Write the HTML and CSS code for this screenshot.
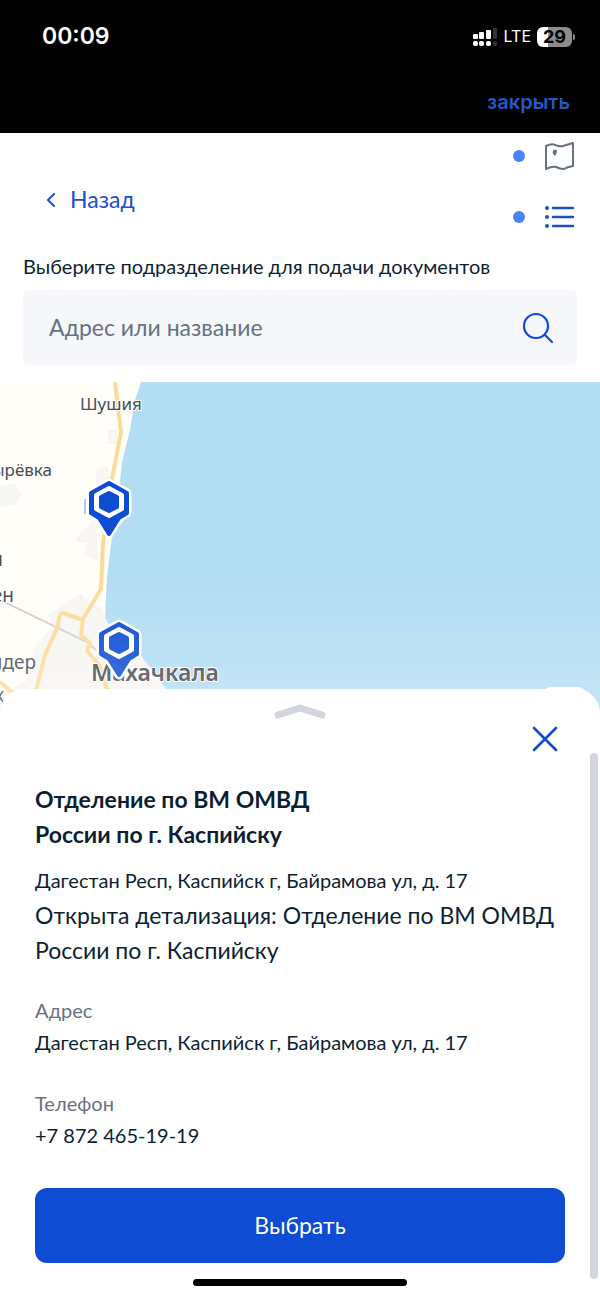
FILE: index.html
```html
<!DOCTYPE html>
<html lang="ru">
<head>
    <meta charset="UTF-8">
    <meta name="viewport" content="width=device-width, initial-scale=1.0">
    <title>Выбор подразделения</title>
    <link rel="stylesheet" href="styles.css">
</head>
<body>
    <header class="top">
        <div class="status">
            <span class="time">00:09</span>
            <div class="status-right">
                <svg class="signal" width="25" height="20" viewBox="0 0 25 20" fill="#fff">
                    <rect x="0" y="7" width="5" height="5" rx="1"/>
                    <rect x="6" y="5" width="5" height="7" rx="1"/>
                    <rect x="13" y="3" width="5" height="9" rx="1"/>
                    <rect x="20" y="1" width="4" height="11" rx="1" fill="#333"/>
                    <rect x="0" y="14" width="5" height="5" rx="2"/>
                    <rect x="6" y="14" width="5" height="5" rx="2"/>
                    <rect x="13" y="14" width="5" height="5" rx="2"/>
                    <rect x="20" y="14" width="4" height="5" rx="2" fill="#333"/>
                </svg>
                <span class="network">LTE</span>
                <span class="battery">29</span>
            </div>
        </div>
        <button class="dismiss" type="button">закрыть</button>
    </header>

    <main>
        <div class="toolbar">
            <a class="back" href="#">
                <svg width="8" height="14" viewBox="0 0 8 14" fill="none" stroke="#1b50c8" stroke-width="2" stroke-linecap="round" stroke-linejoin="round"><path d="M7 1 1 7l6 6"/></svg>
                Назад
            </a>
            <ul class="views">
                <li>
                    <button type="button" aria-label="Карта">
                        <svg width="32" height="30" viewBox="0 0 32 30" fill="none" stroke="#66727f" stroke-width="2" stroke-linejoin="round">
                            <path d="M3 5q6-3 9-1 5 2 8 1l10-3v23q-6 1-9 3-4 0-8-2-4-1-10 2z"/>
                            <path d="M12 15c-2-2-3-3-2-5s4-1 4 0c0 2-1 3-2 5z" fill="#66727f" stroke="none"/>
                        </svg>
                    </button>
                </li>
                <li>
                    <button type="button" aria-label="Список">
                        <svg width="32" height="30" viewBox="0 0 32 30" fill="#1b50c8">
                            <circle cx="4" cy="6" r="2"/><circle cx="4" cy="15" r="2"/><circle cx="4" cy="24" r="2"/>
                            <path d="M10 6h20M10 15h20M10 24h20" stroke="#1b50c8" stroke-width="2.4" stroke-linecap="round"/>
                        </svg>
                    </button>
                </li>
            </ul>
        </div>

        <form class="search">
            <label for="search">Выберите подразделение для подачи документов</label>
            <div class="search-box">
                <input type="text" id="search" placeholder="Адрес или название">
                <button type="button" aria-label="Найти">
                    <svg width="32" height="32" viewBox="0 0 32 32" fill="none" stroke="#0d4cd3" stroke-width="2.2" stroke-linecap="round"><circle cx="14" cy="14" r="12"/><path d="m23 23 7 7"/></svg>
                </button>
            </div>
        </form>

        <div class="map">
            <svg class="map-canvas" viewBox="0 0 600 340" preserveAspectRatio="xMinYMin slice">
                <defs>
                    <linearGradient id="haze" x1="0" y1="0" x2="0" y2="1">
                        <stop offset="0" stop-color="#fff" stop-opacity="0"/>
                        <stop offset="1" stop-color="#fff" stop-opacity=".26"/>
                    </linearGradient>
                    <g id="pin">
                        <path d="M0-19 18-9V11L11 15 0 32-11 15l-7-4V-9z" fill="#fff" stroke="#fff" stroke-width="9" stroke-linejoin="round"/>
                        <path d="M0-19 18-9V11L10 16 0 32-10 16l-8-5V-9z" fill="#0d4cd3" stroke="#0d4cd3" stroke-width="4" stroke-linejoin="round"/>
                        <path d="M0-14 13-7v14L0 14-13 7v-14z" fill="#fff" stroke="#fff" stroke-width="4" stroke-linejoin="round"/>
                        <path d="M0-9 8-5v10L0 9-8 5v-10z" fill="#0d4cd3" stroke="#0d4cd3" stroke-width="4" stroke-linejoin="round"/>
                    </g>
                </defs>
                <rect width="600" height="340" fill="#fffef8"/>
                <!-- built-up areas -->
                <g fill="#f7f6f3">
                    <path d="M108 48h9v14h-10zM97 87l12-2v16H95zM0 104l16-2 5 10-4 10-17 3z"/>
                    <path d="m96 135 2 44-14-6 3-12-13-2zM70 218l12-6 8 10 12 4 6 20 18 10 16 10 32 46v30H0v-30l26-12 10-38 18-18-6-10z"/>
                </g>
                <!-- sea -->
                <path d="M141 0 135 18 130 48 122 80 119 110 112 155 107 195 105 236 112 248 130 262 146 280 166 307 180 340H600V0z" fill="#b3ddf3"/>
                <path d="m0 218 87 42 10 9" fill="none" stroke="#d4d1c6" stroke-width="2"/>
                <g fill="none" stroke="#fbdb9b" stroke-width="4" stroke-linejoin="round">
                    <path d="m115 0 6 50-10 52-8 60-2 45-18 30-2 16 9 8-3 8 12 14 8 24 24 20 36 12"/>
                    <path d="m83 238-20-7q-4 0-5 13l-13 29-9 36M0 300l14 12"/>
                </g>
                <g class="places">
                    <text x="80" y="28">Шушия</text>
                    <text x="52" y="94" text-anchor="end">Зубутырёвка</text>
                    <text x="3" y="184" text-anchor="end" class="large">Шамхалы</text>
                    <text x="14" y="220" text-anchor="end" class="large">Шамхал-Термен</text>
                    <text x="36" y="287" text-anchor="end" class="large">Семендер</text>
                    <text x="4" y="320" text-anchor="end" class="large">Талгинск</text>
                    <text x="91" y="299" class="city">Махачкала</text>
                </g>
                <path d="M85 117v15" stroke="#7792d7"/>
                <use href="#pin" x="109" y="120"/>
                <use href="#pin" x="119" y="261"/>
                <rect y="200" width="600" height="140" fill="url(#haze)"/>
                <rect x="542" y="305" width="45" height="30" rx="9" fill="#fff"/>
            </svg>
        </div>

        <section class="sheet">
            <div class="scrollbar"></div>
            <svg class="grip" width="52" height="16" viewBox="0 0 52 16" fill="none" stroke="#d0d5e0" stroke-width="7" stroke-linecap="round" stroke-linejoin="round"><path d="m4 12 22-7 22 7"/></svg>
            <button class="close" type="button" aria-label="Закрыть">
                <svg width="26" height="26" viewBox="0 0 26 26" stroke="#0d4cd3" stroke-width="2.6" stroke-linecap="round"><path d="m2 2 22 22M24 2 2 24"/></svg>
            </button>

            <h1>Отделение по ВМ ОМВД<br>России по г. Каспийску</h1>
            <p class="address">Дагестан Респ, Каспийск г, Байрамова ул, д. 17</p>
            <p class="details">Открыта детализация: Отделение по ВМ ОМВД России по г. Каспийску</p>

            <dl>
                <div>
                    <dt>Адрес</dt>
                    <dd>Дагестан Респ, Каспийск г, Байрамова ул, д. 17</dd>
                </div>
                <div>
                    <dt>Телефон</dt>
                    <dd>+7 872 465-19-19</dd>
                </div>
            </dl>

            <button class="choose" type="button">Выбрать</button>
            <div class="home-bar"></div>
        </section>
    </main>
</body>
</html>
```
FILE: styles.css
```css
* {
    box-sizing: border-box;
}
body, h1, p, ul, dl, dd {
    margin: 0;
    padding: 0;
}
body {
    background: #fff;
    color: #0b1f33;
    font-family: Lato, sans-serif;
    font-size: 23px;
    line-height: 35px;
}
button {
    border: 0;
    padding: 0;
    background: none;
    font: inherit;
    cursor: pointer;
}
svg {
    display: block;
}

/* Status bar */
.top {
    height: 133px;
    background: #000;
    color: #fff;
    font-family: Inter, sans-serif;
    display: flex;
    flex-direction: column;
    justify-content: space-between;
    padding: 19px 28px 13px 42px;
}
.status, .status-right {
    display: flex;
    align-items: center;
}
.status {
    justify-content: space-between;
}
.status-right {
    gap: 6px;
}
.time {
    font-size: 23px;
    font-weight: 600;
}
.network {
    font-size: 16px;
}
.battery {
    position: relative;
    width: 35px;
    height: 20px;
    border-radius: 6px;
    background: linear-gradient(90deg, #fff 30%, #8c8c8c 30%);
    color: #000;
    font-size: 18px;
    font-weight: 700;
    line-height: 20px;
    text-align: center;
}
.battery::after {
    content: "";
    position: absolute;
    left: 36px;
    top: 7px;
    width: 2px;
    height: 6px;
    border-radius: 0 2px 2px 0;
    background: #8c8c8c;
}
.dismiss {
    align-self: flex-end;
    margin-right: 2px;
    color: #2459c4;
    font-size: 20px;
    font-weight: 600;
}

/* Toolbar */
.toolbar {
    display: flex;
    justify-content: space-between;
    padding: 0 25px 0 47px;
}
.back {
    display: flex;
    align-items: center;
    align-self: flex-start;
    gap: 15px;
    margin-top: 49px;
    color: #1b50c8;
    text-decoration: none;
}
.views {
    list-style: none;
    display: flex;
    flex-direction: column;
    gap: 15px;
}
.views li {
    height: 46px;
    display: flex;
    align-items: center;
    gap: 18px;
}
.views li::before {
    content: "";
    width: 12px;
    height: 12px;
    border-radius: 50%;
    background: #4a83f7;
}

/* Search */
.search {
    padding: 9px 23px 17px;
}
.search label {
    display: block;
    font-size: 20px;
    margin-bottom: 6px;
}
.search-box {
    display: flex;
    align-items: center;
    height: 75px;
    padding: 0 23px 0 26px;
    border-radius: 6px;
    background: #f5f7fb;
}
.search-box input {
    flex: 1;
    min-width: 0;
    border: 0;
    padding: 0;
    outline: none;
    background: none;
    color: inherit;
    font: inherit;
}
.search-box input::placeholder {
    color: #66727f;
    opacity: 1;
}

/* Map */
.map-canvas {
    width: 100%;
    height: 340px;
}
.places {
    font-family: "Noto Sans", sans-serif;
    font-size: 17px;
    fill: #484c53;
    stroke: #fff;
    stroke-width: 2px;
    paint-order: stroke;
}
.places .large {
    font-size: 19px;
}
.places .city {
    font-size: 23px;
    font-weight: 600;
}

/* Bottom sheet */
.sheet {
    position: relative;
    display: flex;
    flex-direction: column;
    margin-top: -33px;
    padding: 14px 35px 11px;
    border-radius: 24px 24px 0 0;
    background: #fff;
}
.scrollbar {
    position: absolute;
    top: 64px;
    right: 2px;
    bottom: 18px;
    width: 8px;
    border-radius: 4px;
    background: #d0d5e0;
}
.grip {
    align-self: center;
}
.close {
    align-self: flex-end;
    margin: 7px 7px 30px;
}
h1 {
    font-size: 23px;
    font-weight: 700;
}
.address, dl {
    font-size: 20px;
    line-height: 32px;
}
.address {
    margin: 12px 0 2px;
}
dl {
    display: flex;
    flex-direction: column;
    gap: 29px;
    margin: 26px 0 37px;
}
dt {
    color: #66727f;
}
.choose {
    height: 75px;
    border-radius: 12px;
    background: #0d4cd3;
    color: #fff;
}
.home-bar {
    align-self: center;
    width: 214px;
    height: 7px;
    margin-top: 16px;
    border-radius: 4px;
    background: #000;
}
```
